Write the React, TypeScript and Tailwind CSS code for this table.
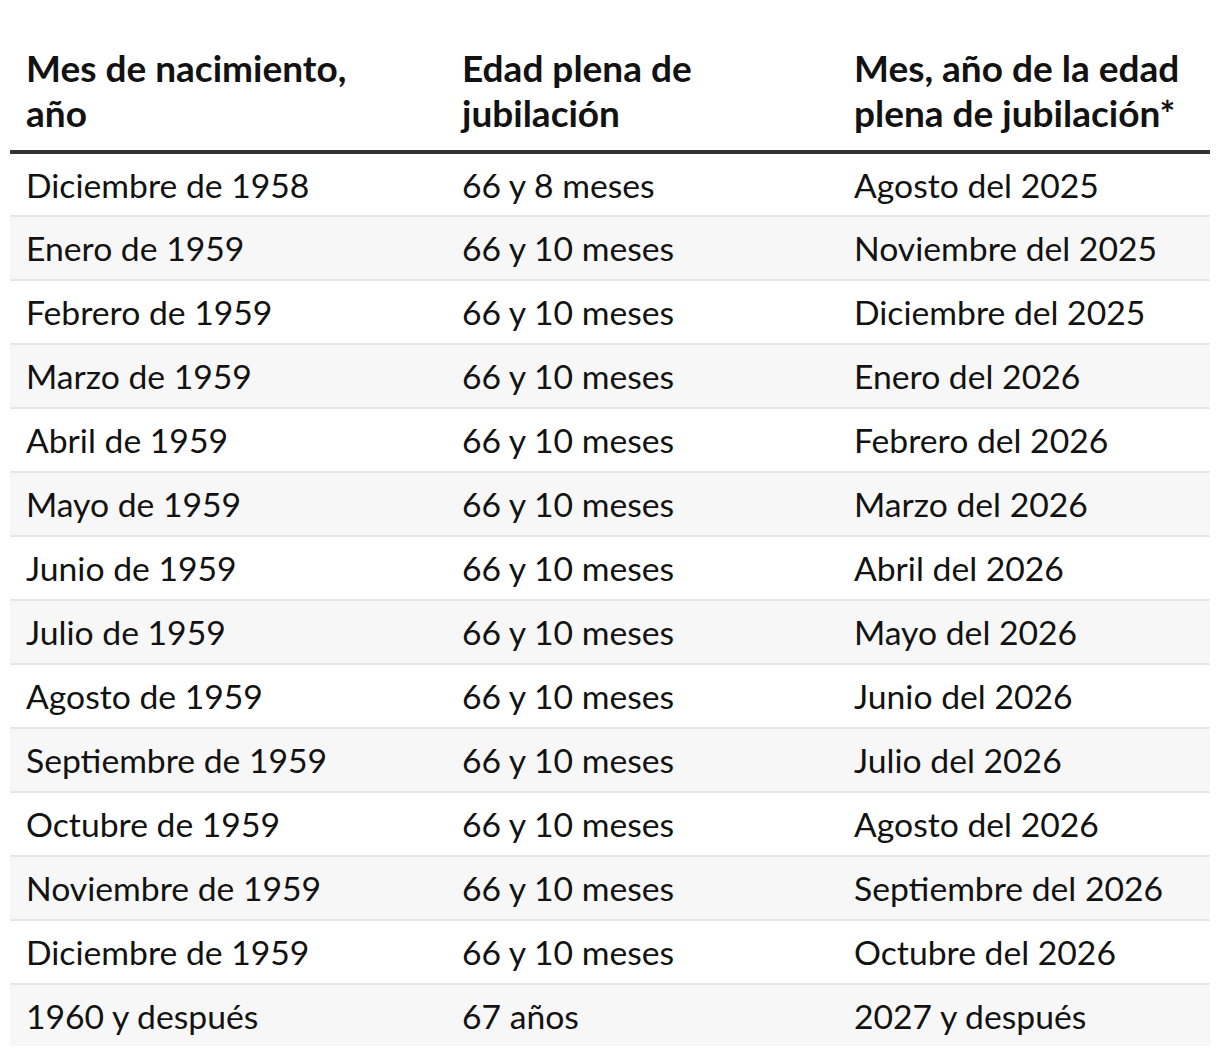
import React from "react";

const rows: [string, string, string][] = [
  ["Diciembre de 1958", "66 y 8 meses", "Agosto del 2025"],
  ["Enero de 1959", "66 y 10 meses", "Noviembre del 2025"],
  ["Febrero de 1959", "66 y 10 meses", "Diciembre del 2025"],
  ["Marzo de 1959", "66 y 10 meses", "Enero del 2026"],
  ["Abril de 1959", "66 y 10 meses", "Febrero del 2026"],
  ["Mayo de 1959", "66 y 10 meses", "Marzo del 2026"],
  ["Junio de 1959", "66 y 10 meses", "Abril del 2026"],
  ["Julio de 1959", "66 y 10 meses", "Mayo del 2026"],
  ["Agosto de 1959", "66 y 10 meses", "Junio del 2026"],
  ["Septiembre de 1959", "66 y 10 meses", "Julio del 2026"],
  ["Octubre de 1959", "66 y 10 meses", "Agosto del 2026"],
  ["Noviembre de 1959", "66 y 10 meses", "Septiembre del 2026"],
  ["Diciembre de 1959", "66 y 10 meses", "Octubre del 2026"],
  ["1960 y después", "67 años", "2027 y después"],
];

export default function App() {
  return (
    <div className="bg-white w-[1220px] min-h-[1058px] px-[10px] pt-[45px] font-['Lato',sans-serif] text-[#121212]">
      <table className="w-[1200px] border-collapse table-fixed">
        <colgroup>
          <col className="w-[436px]" />
          <col className="w-[392px]" />
          <col className="w-[372px]" />
        </colgroup>
        <thead>
          <tr className="border-b-4 border-[#333333]">
            <th className="text-left align-bottom font-bold text-[37px] leading-[45px] pl-[16px] pb-[15px]">
              Mes de nacimiento,
              <br />
              año
            </th>
            <th className="text-left align-bottom font-bold text-[37px] leading-[45px] pl-[16px] pb-[15px]">
              Edad plena de
              <br />
              jubilación
            </th>
            <th className="text-left align-bottom font-bold text-[37px] leading-[45px] pl-[16px] pb-[15px]">
              Mes, año de la edad
              <br />
              plena de jubilación*
            </th>
          </tr>
        </thead>
        <tbody>
          {rows.map((r, i) => {
            const last = i === rows.length - 1;
            return (
              <tr
                key={i}
                className={
                  (i % 2 === 1 ? "bg-[#f7f7f7] " : "bg-white ") +
                  (last ? "" : "border-b-2 border-[#e6e6e6]")
                }
              >
                {r.map((c, j) => (
                  <td
                    key={j}
                    className={
                      (last ? "h-[62px] " : "h-[64px] ") +
                      "p-0 pl-[16px] text-[33.7px] leading-[40px] align-middle"
                    }
                  >
                    {c}
                  </td>
                ))}
              </tr>
            );
          })}
        </tbody>
      </table>
    </div>
  );
}
